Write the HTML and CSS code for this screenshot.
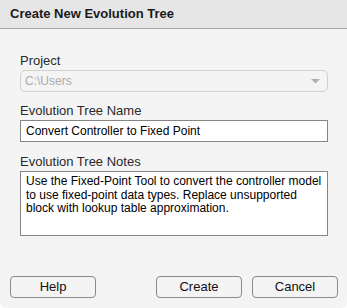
FILE: index.html
```html
<!DOCTYPE html>
<html>
<head>
<meta charset="utf-8">
<link rel="stylesheet" href="styles.css">
</head>
<body>
<div class="dialog">
  <div class="titlebar">Create New Evolution Tree</div>
  <div class="content">
    <div class="field">
      <div class="label">Project</div>
      <div class="select">
        <span class="select-text">C:\Users</span>
        <svg class="arrow" width="9" height="5" viewBox="0 0 9 5"><path d="M0 0 L9 0 L4.5 4.5 Z" fill="#b0b0b0"/></svg>
      </div>
    </div>
    <div class="field">
      <div class="label">Evolution Tree Name</div>
      <div class="input">Convert Controller to Fixed Point</div>
    </div>
    <div class="field notes">
      <div class="label">Evolution Tree Notes</div>
      <div class="textarea">Use the Fixed-Point Tool to convert the controller model to use fixed-point data types. Replace unsupported block with lookup table approximation.</div>
    </div>
  </div>
  <div class="buttons">
    <div class="btn">Help</div>
    <div class="spacer"></div>
    <div class="btn">Create</div>
    <div class="btn">Cancel</div>
  </div>
</div>
</body>
</html>
```
FILE: styles.css
```css
html, body {
  margin: 0;
  padding: 0;
  background: #ffffff;
}
body {
  font-family: "Liberation Sans", Arial, sans-serif;
  font-size: 13px;
  color: #212121;
}
.dialog {
  width: 347px;
  height: 308px;
  background: #f4f4f4;
  display: flex;
  flex-direction: column;
  box-sizing: border-box;
  border-radius: 0 0 6px 6px;
  overflow: hidden;
}
.titlebar {
  height: 28px;
  background: #e6e6e6;
  border-bottom: 1px solid #a8a8a8;
  box-sizing: content-box;
  font-weight: bold;
  font-size: 13px;
  line-height: 27px;
  padding-left: 10px;
  color: #1a1a1a;
}
.content {
  padding: 23px 19px 0 20px;
  display: flex;
  flex-direction: column;
  gap: 10px;
}
.field {
  display: flex;
  flex-direction: column;
  gap: 1px;
}
.notes {
  margin-top: 1px;
}
.label {
  font-size: 13px;
  line-height: 17px;
  color: #2a2a2a;
}
.select {
  height: 22px;
  box-sizing: border-box;
  border: 1px solid #cfcfcf;
  border-radius: 5px;
  display: flex;
  align-items: center;
  justify-content: space-between;
  padding: 0 7px 0 4px;
  font-size: 12px;
}
.select-text {
  color: #ababab;
}
.input {
  height: 22px;
  box-sizing: border-box;
  border: 1px solid #858585;
  background: #fff;
  padding: 0 5px;
  line-height: 20px;
  font-size: 12px;
  color: #000;
}
.textarea {
  height: 65px;
  box-sizing: border-box;
  border: 1px solid #858585;
  background: #fff;
  padding: 3px 5px;
  line-height: 13.5px;
  font-size: 12px;
  color: #000;
}
.buttons {
  margin-top: auto;
  display: flex;
  gap: 10px;
  padding: 0 9px 10px 10px;
}
.spacer {
  flex: 1;
}
.btn {
  width: 86px;
  height: 22px;
  box-sizing: border-box;
  border: 1px solid #8a8a8a;
  border-radius: 4px;
  text-align: center;
  line-height: 19px;
  font-size: 13px;
  color: #111;
}
```
